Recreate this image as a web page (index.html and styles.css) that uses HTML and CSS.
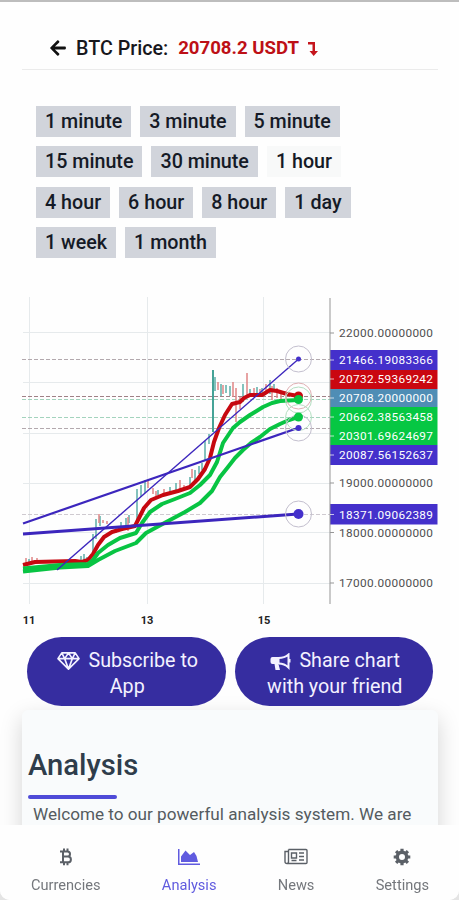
FILE: index.html
```
<!DOCTYPE html>
<html lang="en">
<head>
    <meta charset="UTF-8">
    <meta name="viewport" content="width=device-width, initial-scale=1.0">
    <title>BTC Price</title>
    <link rel="stylesheet" href="styles.css">
</head>
<body>
    <div class="page">
        <header class="price-header">
            <svg class="back-icon" viewBox="0 0 448 512"><path d="M257.5 445.1l-22.2 22.2c-9.4 9.4-24.6 9.4-33.9 0L7 273c-9.4-9.4-9.4-24.6 0-33.9L201.4 44.7c9.4-9.4 24.6-9.4 33.9 0l22.2 22.2c9.5 9.5 9.3 25-.4 34.3L136.6 216H424c13.3 0 24 10.7 24 24v32c0 13.3-10.7 24-24 24H136.6l120.5 114.8c9.8 9.3 10 24.8.4 34.3z"/></svg>
            <span class="price-label">BTC Price:</span>
            <span class="price-value">20708.2 USDT</span>
            <svg class="down-icon" viewBox="0 0 10 15"><path d="M0 1h7v9h3l-4.300 5L1.500 10h3V3.400H0z"/></svg>
        </header>

        <div class="intervals">
            <div class="interval-row">
                <button>1 minute</button>
                <button>3 minute</button>
                <button>5 minute</button>
            </div>
            <div class="interval-row">
                <button>15 minute</button>
                <button>30 minute</button>
                <button class="active">1 hour</button>
            </div>
            <div class="interval-row">
                <button>4 hour</button>
                <button>6 hour</button>
                <button>8 hour</button>
                <button>1 day</button>
            </div>
            <div class="interval-row">
                <button>1 week</button>
                <button>1 month</button>
            </div>
        </div>

        <svg class="chart" viewBox="22 297 416 333">
            <!-- grid -->
            <path class="grid" d="M23 332.500H330M23 382.500H330M23 433.500H330M23 483.500H330M23 532.500H330M23 583.500H330M29.500 297V604M147.500 297V604M263.500 297V604"/>

            <!-- price levels -->
            <g class="levels">
                <path class="level-gray" d="M22 359.500H330M22 428.500H330"/>
                <path class="level-light" d="M22 514.500H330"/>
                <path class="level-red" d="M22 396.500H330"/>
                <path class="level-green" d="M22 399.500H330M22 417.500H330"/>
            </g>

            <!-- candles -->
            <path class="candle-up" d="M29 559v5M81 556v6M84 554v8M87 557v5M93 534v22M96 519v20M100 516v10M116 527v6M121 522v8M126 518v9M129 515v8M137 489v32M141 485v12M145 480v13M158 490v5M170 487v5M176 483v7M190 477v9M195 470v10M199 466v8M202 463v7M205 441v20M209 434v10M215 377v14M221 384v12M226 385v8M230 386v10M243 384v18M250 389v7M257 387v10M262 388v8M270 380v14M274 384v8"/>
            <path class="candle-long" d="M213 370v62"/>
            <path class="candle-down" d="M26 558v5M32 557v5M37 558v4M99 514v9M103 520v3M107 521v3M128 517v14M148 480v8M153 488v6M156 491v5M164 489v5M180 480v9M184 485v5M192 469v9M218 382v8M223 385v9M233 382v15M236 388v34M240 397v12M247 373v22M254 388v9M260 389v8M266 384v10M272 386v14M277 388v10M281 393v9M286 391v10"/>

            <!-- moving averages -->
            <g class="averages">
                <path class="red" d="M23 565L35 562L75 561L82 562L88 560L93 554L98 545L104 537L112 532L122 529L135 526L139 518L144 508L151 500L163 495L178 491L190 487L198 479L205 469L210 458L214 442L219 428L225 415L232 404L240 402L244 398L250 395L262 395L270 390L277 391L287 394L298 396"/>
                <path class="green" d="M23 568.500L60 565L88 564L93 560L98 553L108 545L120 538L136 533L142 523L150 512L162 504L175 499L190 493L200 485L210 475L217 462L223 443L233 428L240 422L250 415L263 407L272 403L280 401L298 400"/>
                <path class="green" d="M23 571.500L60 567.500L88 566L98 560L115 551L136 543L146 533L157 527L170 520L185 512L200 503L212 491L220 477L228 467L235 458L243 450L251 443L260 437L270 429L280 424L289 420L298 417"/>
            </g>

            <!-- trend lines -->
            <path class="trend" stroke-width="3" d="M23 534L298 514"/>
            <path class="trend" stroke-width="2.200" d="M23 523.500L298 428"/>
            <path class="trend" stroke-width="1.400" d="M57 570L298 359.500"/>

            <!-- line ends -->
            <g class="rings">
                <circle cx="298.500" cy="359" r="13"/>
                <circle class="ring-red" cx="298.500" cy="396" r="13"/>
                <circle class="ring-green" cx="298.500" cy="400" r="13"/>
                <circle class="ring-green" cx="298.500" cy="417.500" r="13"/>
                <circle cx="298.500" cy="428" r="13"/>
                <circle cx="298.500" cy="514" r="13"/>
            </g>
            <circle class="dot-blue" cx="298.500" cy="359" r="2.500"/>
            <circle class="dot-red" cx="298.500" cy="396" r="4.500"/>
            <circle class="dot-green" cx="298.500" cy="399.500" r="4.500"/>
            <circle class="dot-green" cx="298.500" cy="417" r="4.500"/>
            <circle class="dot-blue" cx="298.500" cy="428" r="3"/>
            <circle class="dot-blue" cx="298.500" cy="514" r="5"/>

            <!-- price axis -->
            <rect class="tag-blue" x="330" y="350" width="107.500" height="20"/>
            <rect class="tag-red" x="330" y="370" width="107.500" height="19"/>
            <rect class="tag-steel" x="330" y="389" width="107.500" height="18"/>
            <rect class="tag-green" x="330" y="407" width="107.500" height="38"/>
            <rect class="tag-blue" x="330" y="445" width="107.500" height="20"/>
            <rect class="tag-blue" x="330" y="504" width="107.500" height="20.500"/>
            <path class="axis" d="M330 298V604M330 333h4M330 483h4M330 532.500h4M330 583h4"/>
            <path class="tag-ticks" d="M330 360h4M330 379h4M330 398h4M330 417h4M330 436h4M330 455h4M330 514.500h4"/>
            <g class="axis-text">
                <text x="339" y="337" textLength="94">22000.00000000</text>
                <text x="339" y="487" textLength="94">19000.00000000</text>
                <text x="339" y="537" textLength="94">18000.00000000</text>
                <text x="339" y="587" textLength="94">17000.00000000</text>
            </g>
            <g class="tag-text">
                <text x="339" y="364" textLength="94">21466.19083366</text>
                <text x="339" y="383" textLength="94">20732.59369242</text>
                <text x="339" y="402" textLength="94">20708.20000000</text>
                <text x="339" y="421" textLength="94">20662.38563458</text>
                <text x="339" y="439.500" textLength="94">20301.69624697</text>
                <text x="339" y="459" textLength="94">20087.56152637</text>
                <text x="339" y="518.500" textLength="94">18371.09062389</text>
            </g>

            <!-- days -->
            <g class="day-text">
                <text x="29" y="624">11</text>
                <text x="147" y="624">13</text>
                <text x="264" y="624">15</text>
            </g>
        </svg>

        <div class="actions">
            <button class="action">
                <svg class="gem-icon" viewBox="0 0 24 20"><path d="M5 1.500h14l4 6L12 18.500L1 7.500zM1 7.500h22M5 1.500l3 6l4 11l4-11l3-6M8 7.500l4-6l4 6"/></svg>
                Subscribe to App
            </button>
            <button class="action">
                <svg class="horn-icon" viewBox="0 0 20 18"><path class="horn-fill" d="M2 4h7v7H8l1.500 6H5L4 11H2Q0 11 0 9V6Q0 4 2 4z"/><path class="horn-line" d="M8 5Q14 5 18 1.500v13Q14 10.500 8 10.500M19 6v3.500"/></svg>
                Share chart with your friend
            </button>
        </div>

        <section class="analysis">
            <h2>Analysis</h2>
            <div class="underline"></div>
            <p>Welcome to our powerful analysis system. We are</p>
        </section>

        <nav class="bottom-nav">
            <a class="nav-item">
                <svg class="nav-icon" viewBox="0 0 22 18"><path class="coin" d="M5 3.500h7.500a2.500 2.500 0 0 1 0 5H8h5a2.800 2.800 0 0 1 0 5.800H5M8 3.500v10.800M9 .5v3M12.500 .5v3M9 14.300v3M12.500 14.300v3"/></svg>
                <span>Currencies</span>
            </a>
            <a class="nav-item active">
                <svg class="nav-icon" viewBox="0 0 22 18"><path d="M0 1h1.500v14.500H22V17H0z"/><path d="M3 14V8.500l4.500-6L12 7l4-3l2.500 4L20 14z"/></svg>
                <span>Analysis</span>
            </a>
            <a class="nav-item">
                <svg class="nav-icon news-icon" viewBox="0 0 24 18"><path d="M4.500 1.500H22q1 0 1 1v12q0 1-1 1H3q-2 0-2-2V3.500h3.500M4.500 1.500v12q0 2-1.500 2M7.500 5h5v5h-5zM15 5h5M15 8.500h5M15 12h5M7.500 12.500h5"/></svg>
                <span>News</span>
            </a>
            <a class="nav-item">
                <svg class="nav-icon" viewBox="0 0 22 18"><circle class="gear-ring" cx="11" cy="9" r="4.700"/><path class="gear-teeth" d="M11 .7v3M11 14.300v3M2.700 9h3M16.300 9h3M5.100 3.100l2.200 2.200M14.700 12.700l2.200 2.200M16.900 3.100l-2.200 2.200M7.300 12.700l-2.200 2.200"/></svg>
                <span>Settings</span>
            </a>
        </nav>
    </div>
</body>
</html>
```
FILE: styles.css
```
* {
    box-sizing: border-box;
}

body {
    margin: 0;
    background-color: #e4e4e4;
    font-family: Roboto, "Liberation Sans", sans-serif;
}

button {
    border: none;
    font-family: inherit;
    cursor: pointer;
}

.page {
    display: flex;
    flex-direction: column;
    height: 900px;
    padding: 0 21px 0 22px;
    overflow: hidden;
    background-color: #fefefe;
    border-top: 2px solid #bdbdbd;
    border-radius: 0 0 10px 10px;
}

.price-header {
    display: flex;
    flex: none;
    align-items: center;
    height: 68px;
    padding: 25px 0 0 28px;
    border-bottom: 1px solid #ebebeb;
    font-size: 19.700px;
    font-weight: 500;
    white-space: nowrap;
}

.back-icon {
    width: 16px;
    height: 18px;
    margin-right: 10px;
    fill: #111;
}

.price-label {
    margin-right: 10px;
    color: #17171c;
}

.price-value {
    margin-right: 9px;
    color: #bd1016;
    font-size: 18.600px;
    font-weight: 700;
}

.down-icon {
    width: 10px;
    height: 15px;
    fill: #c5161d;
}

.intervals {
    display: flex;
    flex: none;
    flex-direction: column;
    gap: 9.330px;
    padding: 36px 0 0 14px;
}

.interval-row {
    display: flex;
    gap: 9px;
}

.interval-row button {
    height: 31px;
    padding: 0 9px;
    background-color: #d1d4db;
    color: #151a26;
    font-size: 19.700px;
    font-weight: 500;
    white-space: nowrap;
}

.interval-row button.active {
    background-color: #f8f9f9;
}

.chart {
    flex: none;
    width: 416px;
    height: 333px;
    margin-top: 39px;
    fill: none;
}

.grid {
    stroke: #e6eaec;
}

.levels {
    stroke-dasharray: 4 2;
}

.level-gray {
    stroke: #b3a9ae;
}

.level-light {
    stroke: #cfcad0;
}

.level-red {
    stroke: #a08086;
}

.level-green {
    stroke: #a3d3bd;
}

.candle-up {
    stroke: #5cafa8;
    stroke-width: 1.500;
}

.candle-long {
    stroke: #45a397;
    stroke-width: 2;
}

.candle-down {
    stroke: #df8585;
    stroke-width: 1.500;
}

.averages {
    stroke-width: 4;
    stroke-linejoin: round;
}

.red {
    stroke: #c60810;
}

.green {
    stroke: #08c443;
}

.trend {
    stroke: #3c26bd;
}

.rings {
    stroke: #c3bfce;
}

.ring-red {
    stroke: #dfb0b3;
}

.ring-green {
    stroke: #b4dfc2;
}

.dot-blue,
.tag-blue {
    fill: #4430cb;
}

.dot-red,
.tag-red {
    fill: #ca0710;
}

.dot-green,
.tag-green {
    fill: #06c743;
}

.tag-steel {
    fill: #4f8db5;
}

.axis {
    stroke: #969696;
}

.tag-ticks {
    stroke: rgba(255, 255, 255, 0.7);
}

.axis-text,
.tag-text {
    font-size: 11.800px;
}

.axis-text {
    fill: #505050;
}

.tag-text {
    fill: #fff;
}

.day-text {
    fill: #222;
    font-size: 11px;
    font-weight: 700;
    text-anchor: middle;
}

.actions {
    display: flex;
    flex: none;
    gap: 9px;
    margin-top: 7px;
    padding: 0 5px;
}

.action {
    position: relative;
    z-index: 1;
    width: 199px;
    height: 69px;
    padding: 5px 22px 0 24px;
    border-radius: 35px;
    background-color: #362da0;
    color: #f3f1ff;
    font-size: 19.700px;
    line-height: 26px;
}

.gem-icon,
.horn-icon {
    margin-right: 4px;
    vertical-align: -4px;
    fill: none;
    stroke: #f3f1ff;
}

.gem-icon {
    width: 23px;
    height: 20px;
    stroke-width: 1.700;
    stroke-linejoin: round;
}

.horn-icon {
    width: 21px;
    height: 18px;
}

.horn-fill {
    fill: #f3f1ff;
    stroke: none;
}

.horn-line {
    stroke-width: 2;
}

.analysis {
    flex: none;
    height: 160px;
    margin-top: 4px;
    padding: 37px 5px 0 6px;
    border-radius: 6px;
    background-color: #f9fbfc;
    box-shadow: 0 8px 22px rgba(0, 0, 0, 0.17);
}

.analysis h2 {
    margin: 0;
    color: #2f3d4b;
    font-size: 29.200px;
    font-weight: 500;
    line-height: 36px;
}

.underline {
    width: 89px;
    height: 4px;
    margin-top: 12px;
    border-radius: 2px;
    background-color: #4f4bd8;
}

.analysis p {
    margin: 4px 0 0 5px;
    color: #555b60;
    font-size: 17.150px;
    line-height: 22px;
    white-space: nowrap;
}

.bottom-nav {
    position: fixed;
    right: 0;
    bottom: 0;
    left: 0;
    z-index: 2;
    display: flex;
    justify-content: space-between;
    height: 75px;
    padding: 23px 30px 0 31px;
    border-radius: 0 0 10px 10px;
    background-color: #fefefe;
}

.nav-item {
    display: flex;
    flex-direction: column;
    align-items: center;
    gap: 9px;
    color: #74777c;
    font-size: 14.600px;
    line-height: 20px;
}

.nav-item.active {
    color: #605bdf;
}

.nav-icon {
    width: 22px;
    height: 18px;
    fill: currentColor;
}

.coin,
.news-icon,
.gear-ring,
.gear-teeth {
    fill: none;
    stroke: #5b6067;
}

.coin {
    stroke-width: 2;
}

.news-icon {
    width: 24px;
    stroke-width: 1.400;
}

.gear-ring {
    stroke-width: 3.400;
}

.gear-teeth {
    stroke-width: 3.200;
}
```
